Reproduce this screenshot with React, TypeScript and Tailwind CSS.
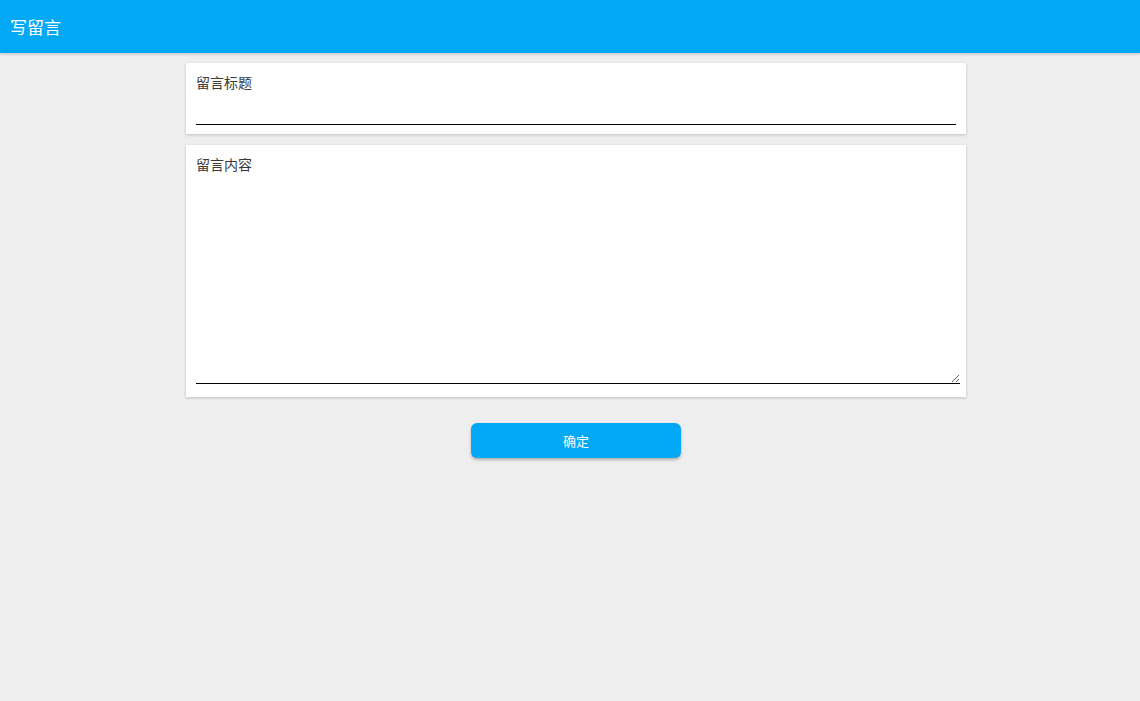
import React from 'react';

const font = { fontFamily: '"Noto Sans CJK SC", "Noto Sans", sans-serif' };

export default function App() {
  return (
    <div className="min-h-[701px] bg-[#eeeeee]" style={font}>
      {/* Header */}
      <header className="h-[53px] bg-[#03a9f4] flex items-center px-[10px] shadow-[0_1px_3px_rgba(0,0,0,0.2)]">
        <h1 className="text-white text-[17px] leading-none">写留言</h1>
      </header>

      <main className="w-[780px] ml-[186px] pt-[10px] flex flex-col">
        {/* 标题 */}
        <div className="bg-white px-[10px] pt-[9px] pb-[9px] shadow-[0_1px_3px_rgba(0,0,0,0.2)]">
          <label className="block text-[14px] leading-[20px] text-[#3a3a3a]">留言标题</label>
          <input
            type="text"
            className="block w-full h-[33px] border-b border-black outline-none text-[14px]"
          />
        </div>

        {/* 内容 */}
        <div className="mt-[11px] bg-white pl-[10px] pr-[6px] pt-[9px] pb-[13px] shadow-[0_1px_3px_rgba(0,0,0,0.2)]">
          <label className="block text-[14px] leading-[20px] text-[#3a3a3a]">留言内容</label>
          <textarea className="block w-full h-[210px] border-b border-black outline-none text-[14px] resize-y" />
        </div>

        <div className="flex justify-center mt-[26px]">
          <button className="w-[210px] h-[35px] rounded-[6px] bg-[#03a9f4] text-white text-[13px] shadow-[0_2px_3px_rgba(0,0,0,0.25)]">
            确定
          </button>
        </div>
      </main>
    </div>
  );
}
